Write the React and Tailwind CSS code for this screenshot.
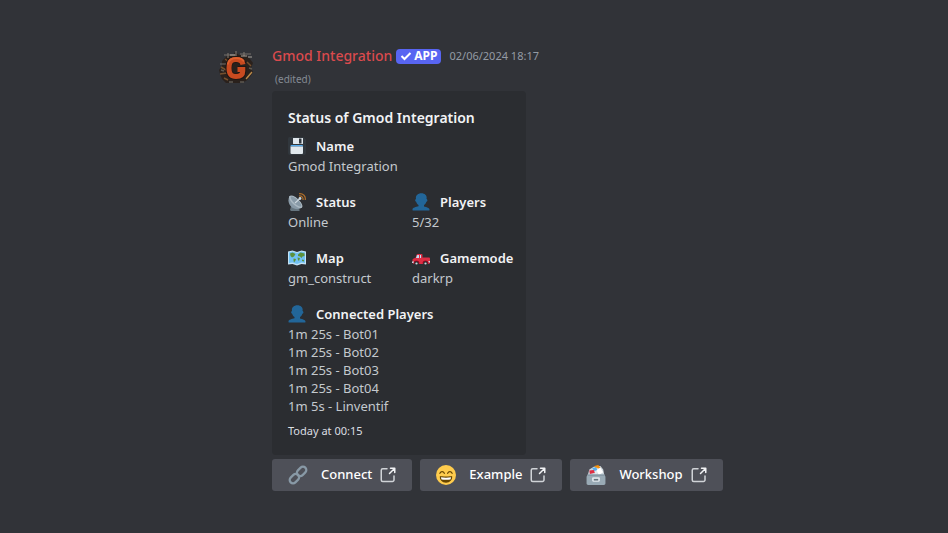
import React from "react";

function Avatar() {
  return (
    <svg viewBox="0 0 40 40" className="h-10 w-10 shrink-0" role="img" aria-label="Gmod Integration avatar">
      <path d="M6 14l4-4 2-2 5 0 2-3 4 3 7 0 4 4 3 4-2 5 2 4-3 5-4 4-6 2-7 0-7 0-4-4-2-5-1-4 3-4z" fill="#2a211c" />
      <path d="M8 8h12M20 4v5M24 7h11M12 6v5M4 17h8M28 5v4" stroke="#77716a" strokeWidth="1.200" />
      <path d="M32 10h4M14 8h5M25 9h6" stroke="#aaa59c" strokeWidth="1" />
      <path d="M5 20l5 3M4 27l7-1M31 31l4-5M31 15l4 4M8 31l4 2M9 12l4 3" stroke="#75502e" strokeWidth="1.500" />
      <path d="M30 32l6-7" stroke="#b98a4a" strokeWidth="1.200" />
      <path d="M5 23l3 1M33 21l3 1M13 35h4M24 35h4" stroke="#5f5a52" strokeWidth="1.400" />
      <path d="M27 17c-.6-3-3-4.500-7-4.500-5 0-7.300 2.500-7.300 8.500s2.300 8.500 7.300 8.500c4.500 0 7-1.800 7-5.500v-1.500h-5" fill="none" stroke="#1c1512" strokeWidth="6.500" />
      <path d="M27 17.500c-.6-3.300-3-5-7-5-4.800 0-7 2.500-7 8.500s2.200 8.500 7 8.500c4.500 0 6.800-1.800 6.800-5.500v-1.500h-5.300" fill="none" stroke="#c94b20" strokeWidth="5" />
      <path d="M28 14.500c-1.500-2.600-4-3.500-7.500-3.500-5 0-8 1.800-8.800 6.500" fill="none" stroke="#df612f" strokeWidth="1.800" />
    </svg>
  );
}

function FloppyIcon() {
  return (
    <svg viewBox="0 0 36 36" className="h-[18px] w-[18px] shrink-0" aria-hidden="true">
      <path d="M4 36s-4 0-4-4V4s0-4 4-4h26c1 0 2 1 2 1l3 3s1 1 1 2v26s0 4-4 4z" fill="#31373d" />
      <path d="M5 19v-1s0-2 2-2h21c2 0 2 2 2 2v1z" fill="#55acee" />
      <path d="M5 32.021V19h25v13s0 2-2 2H7c-2 0-2-1.979-2-1.979zM10 3s0-1 1-1h18c1.048 0 1 1 1 1v10s0 1-1 1H11s-1 0-1-1zm12 10h5V3h-5z" fill="#e1e8ed" />
    </svg>
  );
}

function DishIcon() {
  return (
    <svg viewBox="0 0 36 36" className="h-[18px] w-[18px] shrink-0" aria-hidden="true">
      <path d="M4 34l3-11 12 7 5 4-2 2H6z" fill="#66757f" />
      <path d="M3 6C-1 14 1 23 7 28s14 6 21 1z" fill="#8899a6" />
      <ellipse cx="15.500" cy="17.500" rx="17" ry="7" transform="rotate(43 15.500 17.500)" fill="#aab8c2" />
      <ellipse cx="16" cy="17" rx="14" ry="4.500" transform="rotate(43 16 17)" fill="#8899a6" />
      <path d="M24 11L14 20" stroke="#ccd6dd" strokeWidth="2.200" />
      <circle cx="24" cy="11" r="2.800" fill="#ccd6dd" />
      <path d="M22 6c5-1 9 3 8 8M22 1.500c8-1 14 5 12.500 12.500" fill="none" stroke="#b06f2a" strokeWidth="2.400" />
    </svg>
  );
}

function PersonIcon() {
  return (
    <svg viewBox="0 0 36 36" className="h-[18px] w-[18px] shrink-0" aria-hidden="true">
      <path d="M24 26.799v-2.566c2-1.348 4.080-3.779 4.703-6.896.186.103.206.170.413.170.991 0 1.709-1.287 1.709-2.873 0-1.562-.823-2.827-1.794-2.865.187-.674.293-1.577.293-2.735C29.324 5.168 26 .527 18.541.527c-6.629 0-10.777 4.641-10.777 8.507 0 1.123.069 2.043.188 2.755-.911.137-1.629 1.352-1.629 2.845 0 1.587.804 2.873 1.796 2.873.206 0 .025-.067.209-.170C8.952 20.453 11 22.885 13 24.232v2.414c-5 .645-12 3.437-12 6.230v1.061C1 35 2.076 35 3.137 35h29.725C33.924 35 35 35 35 33.938v-1.061c0-2.615-6-5.225-11-6.078z" fill="#226699" />
    </svg>
  );
}

function MapIcon() {
  return (
    <svg viewBox="0 0 36 36" className="h-[18px] w-[18px] shrink-0" aria-hidden="true">
      <path d="M0 5l9-2 9 3 9-3 9 2v26l-9-1-9 3-9-3-9 1z" fill="#c3e2f5" />
      <path d="M2 7l7-2 9 3 9-3 7 2v21l-7-1-9 3-9-3-7 1z" fill="#71c1f3" />
      <path d="M4 9l5-2 6 3-3 5-4 2-3-3zM11 19l5 1-1 3-3 4-1-4zM20 11l5-4 8 2v5l-4 1-2 3-3-3-4-1zM28 21l4 1v3l-4-1zM19 17l5 1-2 6-2-2z" fill="#5c913b" />
    </svg>
  );
}

function TruckIcon() {
  return (
    <svg viewBox="0 0 36 36" className="h-[18px] w-[18px] shrink-0" aria-hidden="true">
      <path d="M1 22c0-2 2-4 6-4l2-6c1-2 2-2 3-2h7c1 0 2 1 2 2v5h14l1 2v9l-2 2H3l-2-3z" fill="#dd2e44" />
      <path d="M8 18l2-5 1-1h7v6z" fill="#bdddf4" />
      <path d="M14 11h2v8h-2z" fill="#dd2e44" />
      <path d="M0 25h4v3H0zM33 24h3v3h-3z" fill="#ccd6dd" />
      <path d="M3 29a6 6 0 0112 0M21 29a6 6 0 0112 0" fill="#a0041e" />
      <circle cx="9" cy="29" r="4.500" fill="#292f33" />
      <circle cx="27" cy="29" r="4.500" fill="#292f33" />
      <circle cx="9" cy="29" r="2.200" fill="#ccd6dd" />
      <circle cx="27" cy="29" r="2.200" fill="#ccd6dd" />
    </svg>
  );
}

function LinkIcon() {
  return (
    <svg viewBox="0 0 36 36" className="h-5 w-5 shrink-0" aria-hidden="true">
      <g fill="none" stroke="#8899a6" strokeWidth="4">
        <rect x="-9.500" y="-6" width="19" height="12" rx="6" transform="translate(24.500 11.500) rotate(-45)" />
        <rect x="-9.500" y="-6" width="19" height="12" rx="6" transform="translate(11.500 24.500) rotate(-45)" />
      </g>
    </svg>
  );
}

function SmileIcon() {
  return (
    <svg viewBox="0 0 36 36" className="h-5 w-5 shrink-0" aria-hidden="true">
      <circle cx="18" cy="18" r="18" fill="#ffcc4d" />
      <path d="M7 20c3 1 19 1 22 0 1 7-4 12-11 12S6 27 7 20z" fill="#664500" />
      <path d="M9 22c5 1 13 1 18 0 0 2-1 4-1 4-5 1-11 1-16 0 0 0-1-2-1-4z" fill="#fff" />
      <path d="M7 15c2-4 6-4 8 0M21 15c2-4 6-4 8 0" fill="none" stroke="#664500" strokeWidth="2.200" strokeLinecap="round" />
    </svg>
  );
}

function CardBoxIcon() {
  return (
    <svg viewBox="0 0 36 36" className="h-5 w-5 shrink-0" aria-hidden="true">
      <path d="M3 19L6 8l8-5 12-1 5 6 2 11z" fill="#ccd6dd" />
      <path d="M15 2l7-2 4 5-8 2z" fill="#f4900c" />
      <path d="M11 6l9-1 5 8-8 4z" fill="#e1e8ed" />
      <path d="M11 6l7-2 3 5-6 2z" fill="#55acee" />
      <path d="M6 10l8-1 2 5-9 2z" fill="#dd2e44" />
      <path d="M19 9l7-4 5 8-8 5z" fill="#fff" />
      <path d="M3 17h30l2 4v12c0 2-1 3-3 3H4c-2 0-3-1-3-3V21z" fill="#99aab5" />
      <path d="M3 17h30l1 3H2z" fill="#8899a6" />
      <rect x="11" y="22" width="14" height="8" rx="2" fill="#e1e8ed" />
      <rect x="14" y="25" width="8" height="3" fill="#66757f" />
    </svg>
  );
}

function ExternalIcon() {
  return (
    <svg viewBox="0 0 16 16" className="h-4 w-4 shrink-0" fill="none" stroke="#d0d3d7" strokeWidth="1.500" strokeLinecap="round" strokeLinejoin="round" aria-hidden="true">
      <path d="M7 1.750H2.750A1.500 1.500 0 001.250 3.250V13A1.500 1.500 0 002.750 14.500H12.500A1.500 1.500 0 0014 13V9" />
      <path d="M10.500 1.250h4.250V5.500M14.250 1.750L9.500 6.500" stroke="#f2f3f5" />
    </svg>
  );
}

function Field({ icon, label, children, className = "" }) {
  return (
    <div className={className}>
      <dt className="flex items-center gap-[10px] text-[13px] leading-[18px] font-semibold text-[#f2f3f5]">
        {icon}
        {label}
      </dt>
      <dd className="mt-0.5 text-[13px] leading-[18px] text-[#c4c9ce]">{children}</dd>
    </div>
  );
}

function ActionLink({ icon, label }) {
  return (
    <a href="#" className="flex h-8 items-center rounded-[3px] bg-[#4e5058] px-4 text-[13px] font-medium text-white">
      {icon}
      <span className="ml-[13px]">{label}</span>
      <span className="ml-2">
        <ExternalIcon />
      </span>
    </a>
  );
}

const players = [
  ["1m 25s", "Bot01"],
  ["1m 25s", "Bot02"],
  ["1m 25s", "Bot03"],
  ["1m 25s", "Bot04"],
  ["1m 5s", "Linventif"],
];

export default function App() {
  return (
    <main className="min-h-screen bg-[#313338] pt-[45px] pr-4 pb-10 pl-54 font-['Noto_Sans',sans-serif]">
      <article className="flex gap-4">
        <div className="pt-0.5">
          <Avatar />
        </div>
        <div className="min-w-0">
          <header className="flex h-[22px] items-center">
            <h1 className="text-sm leading-[22px] font-medium text-[#da4a4d]">Gmod Integration</h1>
            <span className="ml-1 flex h-[15px] items-center gap-0.5 rounded bg-[#5865f2] px-1 text-xs font-bold text-white">
              <svg viewBox="0 0 12 12" className="h-3 w-3" fill="none" stroke="currentColor" strokeWidth="2" aria-hidden="true">
                <path d="M1.500 6l3 3L10.500 3" />
              </svg>
              APP
            </span>
            <time className="ml-2 text-[11px] text-[#949ba4]">02/06/2024 18:17</time>
          </header>
          <p className="mt-px pl-[3px] text-[10px] leading-[22px] text-[#858b94]">(edited)</p>

          <section className="mt-px w-[254px] rounded bg-[#2b2d31] p-4">
            <h2 className="text-sm leading-[22px] font-semibold text-[#f2f3f5]">Status of Gmod Integration</h2>
            <dl className="mt-2 grid grid-cols-[124px_1fr] gap-y-[18px]">
              <Field icon={<FloppyIcon />} label="Name" className="col-span-2">Gmod Integration</Field>
              <Field icon={<DishIcon />} label="Status">Online</Field>
              <Field icon={<PersonIcon />} label="Players">5/32</Field>
              <Field icon={<MapIcon />} label="Map">gm_construct</Field>
              <Field icon={<TruckIcon />} label="Gamemode">darkrp</Field>
              <Field icon={<PersonIcon />} label="Connected Players" className="col-span-2">
                <ul>
                  {players.map(([time, name]) => (
                    <li key={name}>{time} - {name}</li>
                  ))}
                </ul>
              </Field>
            </dl>
            <footer className="mt-2 text-[11px] leading-4 text-[#dbdee1]">Today at 00:15</footer>
          </section>

          <nav className="mt-1 flex flex-wrap gap-2">
            <ActionLink icon={<LinkIcon />} label="Connect" />
            <ActionLink icon={<SmileIcon />} label="Example" />
            <ActionLink icon={<CardBoxIcon />} label="Workshop" />
          </nav>
        </div>
      </article>
    </main>
  );
}
